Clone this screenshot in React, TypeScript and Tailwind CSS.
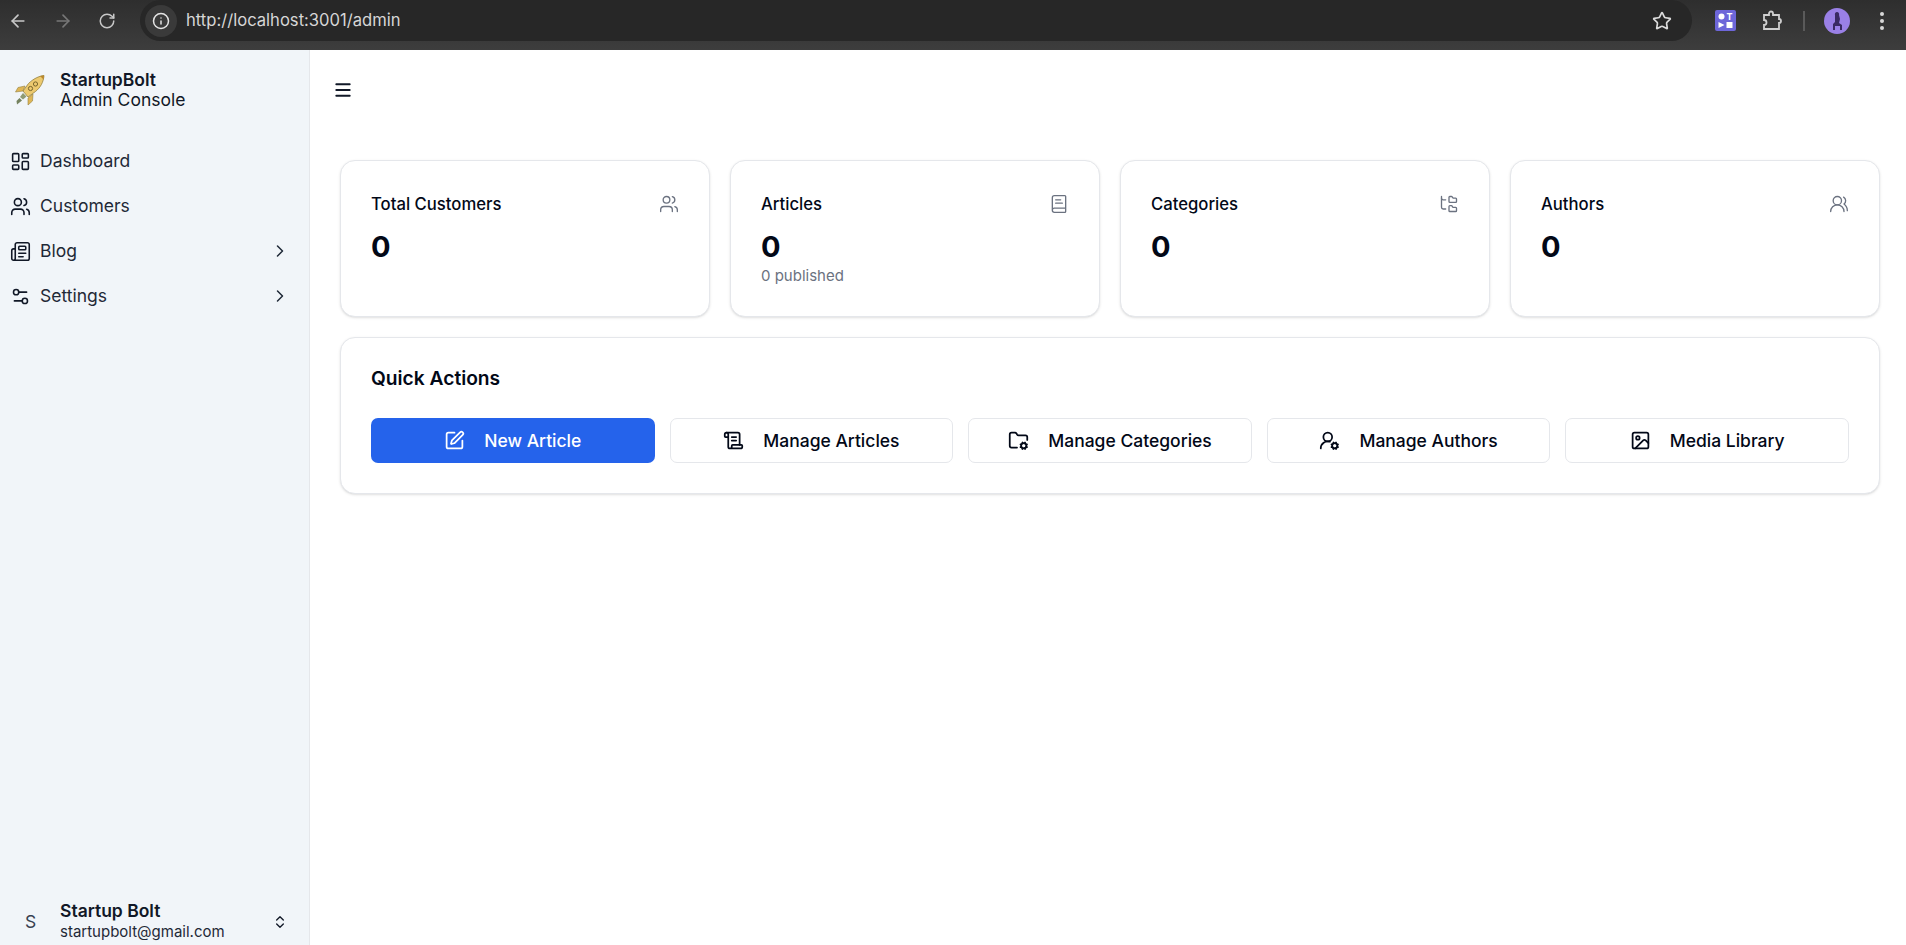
import {
  ArrowLeft, ArrowRight, RotateCw, Info, Star, LayoutDashboard, Users, Newspaper, Settings2, ChevronRight,
  ChevronsUpDown, Menu, BookText, FolderTree, UsersRound, SquarePen, ScrollText, FolderCog, UserRoundCog, Image as ImageIcon,
} from "lucide-react";
import type { ComponentType } from "react";

type IconT = ComponentType<{ size?: number; strokeWidth?: number; className?: string }>;

function Rocket() {
  return (
    <svg width="34" height="34" viewBox="0 0 34 34" className="shrink-0">
      <path d="M12 13 L5 14.5 L2.5 19 L10 18Z" fill="#dfb655" stroke="#94803f" strokeWidth="0.6" />
      <path d="M20 21 L19.5 28 L15 32 L15 25Z" fill="#dfb655" stroke="#94803f" strokeWidth="0.6" />
      <path d="M31 2.5 C26 3 20 6 15.5 10.5 L10 18 L15 24 L22.5 18.5 C27.5 14.5 30.5 9 31 2.5Z" fill="#ecc96f" stroke="#94803f" strokeWidth="0.8" />
      <path d="M10 20 L13.5 23.5 L10 26.5 L7 24Z" fill="#8f9a74" />
      <path d="M6.5 25 L9 27.5 L4 31.5 L3.5 28Z" fill="#75825f" />
      <circle cx="17.5" cy="15.5" r="2.1" fill="none" stroke="#6b5a24" strokeWidth="0.9" />
      <circle cx="22.5" cy="11" r="2.1" fill="none" stroke="#6b5a24" strokeWidth="0.9" />
      <path d="M27 3 L31 2.5 L30.5 6.5Z" fill="#b9872c" />
    </svg>
  );
}

function Toolbar() {
  return (
    <div className="h-[50px] shrink-0 flex items-start bg-gradient-to-b from-[#2e2e2e] to-[#3d3d3d] text-[#d8d8d8]">
      <div className="w-[140px] h-[41px] flex items-center shrink-0 pl-[8px] gap-[25px]">
        <ArrowLeft size={20} strokeWidth={2} className="text-[#c8c8c8]" />
        <ArrowRight size={20} strokeWidth={2} className="text-[#777777]" />
        <RotateCw size={18} strokeWidth={2} className="text-[#c8c8c8]" />
      </div>
      <div className="w-[1552px] h-[41px] rounded-[21px] bg-[#272727] flex items-center pl-[5px] pr-[20px] shrink-0">
        <div className="w-[32px] h-[32px] rounded-full bg-[#3a3a3a] flex items-center justify-center shrink-0">
          <Info size={18} strokeWidth={2} className="text-[#e4e4e4]" />
        </div>
        <span className="ml-[9px] text-[16.6px] text-[#d6d6d6]">http://localhost:3001/admin</span>
        <Star size={20} strokeWidth={2} className="ml-auto text-[#dcdcdc]" />
      </div>
      <div className="flex-1 h-[41px] flex items-center pl-[23px]">
        <svg width="21" height="21" viewBox="0 0 21 21" className="shrink-0">
          <rect width="21" height="21" rx="2" fill="#6d66d9" />
          <circle cx="6.5" cy="6.5" r="3" fill="#fff" />
          <text x="14.5" y="10" fontSize="9" fontWeight="700" textAnchor="middle" fill="#fff" fontFamily="Inter, sans-serif">T</text>
          <path d="M3.5 12 L9.5 15 L3.5 18Z" fill="#fff" />
          <rect x="11.5" y="12" width="6" height="6" fill="#fff" />
        </svg>
        <svg width="22" height="22" viewBox="0 0 22 22" fill="none" stroke="#cfcfcf" strokeWidth="1.8" className="ml-[25px] shrink-0">
          <path d="M3 5 H8 V3.5 a2 2 0 0 1 4 0 V5 H18 V9 a2 2 0 0 1 0 4 V19 H3 V15 a2.5 2.5 0 0 0 0 -5Z" />
        </svg>
        <div className="w-[2px] h-[20px] ml-[20px] bg-[#5a5a5a] shrink-0" />
        <div className="ml-[19px] w-[26px] h-[26px] rounded-full bg-[#9a80e6] flex items-center justify-center shrink-0">
          <svg width="16" height="20" viewBox="0 0 16 20" fill="#3a2a63">
            <path d="M8 1 a2.2 2.2 0 0 1 2 3 L11 8 L10 12 L13 14 V19 H11 V15 H6 V19 H4 V13 L6 11 L6 4 A2.2 2.2 0 0 1 8 1Z" />
          </svg>
        </div>
        <div className="ml-[30px] flex flex-col gap-[3px] shrink-0">
          <div className="w-[4px] h-[4px] rounded-full bg-[#d8d8d8]" />
          <div className="w-[4px] h-[4px] rounded-full bg-[#d8d8d8]" />
          <div className="w-[4px] h-[4px] rounded-full bg-[#d8d8d8]" />
        </div>
      </div>
    </div>
  );
}

function NavRow({ icon: Icon, label, chevron }: { icon: IconT; label: string; chevron?: boolean }) {
  return (
    <div className="h-[40px] flex items-center pl-[10px] pr-[19px] gap-[9px] text-[17.5px] text-[#1f2937]">
      <Icon size={21} strokeWidth={1.8} className="shrink-0 text-[#111827]" />
      <span className="pt-[1px]">{label}</span>
      {chevron && <ChevronRight size={20} strokeWidth={1.8} className="ml-auto text-[#1f2937]" />}
    </div>
  );
}

function Sidebar() {
  return (
    <aside className="w-[310px] shrink-0 bg-[#f1f5f9] border-r border-[#e5e7eb] flex flex-col">
      <div className="h-[91px] shrink-0 flex items-center pl-[13px] pb-[12px] gap-[13px]">
        <Rocket />
        <div className="text-[17.5px] leading-[20px] text-[#111827]">
          <div className="font-semibold">StartupBolt</div>
          <div>Admin Console</div>
        </div>
      </div>
      <nav className="flex flex-col gap-[5px]">
        <NavRow icon={LayoutDashboard} label="Dashboard" />
        <NavRow icon={Users} label="Customers" />
        <NavRow icon={Newspaper} label="Blog" chevron />
        <NavRow icon={Settings2} label="Settings" chevron />
      </nav>
      <div className="mt-auto h-[50px] flex items-center pl-[25px] pr-[21px] pt-[3px] text-[#111827]">
        <span className="w-[35px] text-[17.5px] pt-[1px] text-[#374151]">S</span>
        <div className="leading-none">
          <div className="text-[17.5px] leading-[20px] font-semibold">Startup Bolt</div>
          <div className="text-[15px] leading-[21px] text-[#1f2937]">startupbolt@gmail.com</div>
        </div>
        <ChevronsUpDown size={16} strokeWidth={2} className="ml-auto text-[#111827]" />
      </div>
    </aside>
  );
}

function Stat({ title, icon: Icon, sub }: { title: string; icon: IconT; sub?: string }) {
  return (
    <div className="rounded-[15px] border border-[#e5e7eb] bg-white shadow-sm p-[30px] text-[#020817]">
      <div className="flex items-center justify-between h-[24px]">
        <span className="text-[16.7px] font-medium pt-[3px]">{title}</span>
        <Icon size={20} strokeWidth={1.6} className="text-[#6b7280] mt-[1px]" />
      </div>
      <div className="mt-[12px] text-[29px] leading-[39px] font-bold">0</div>
      <div className="text-[15px] leading-[20px] text-[#6b7280] h-[20px]">{sub}</div>
    </div>
  );
}

function Action({ icon: Icon, label, primary }: { icon: IconT; label: string; primary?: boolean }) {
  return (
    <button
      className={
        primary
          ? "h-[45px] rounded-[7px] bg-[#2563eb] text-white flex items-center justify-center gap-[19px] text-[17.5px] font-medium"
          : "h-[45px] rounded-[7px] bg-white border border-[#e5e7eb] text-[#020817] flex items-center justify-center gap-[19px] text-[17.5px] font-medium"
      }
    >
      <Icon size={21} strokeWidth={2} />
      <span>{label}</span>
    </button>
  );
}

export default function App() {
  return (
    <div className="h-screen flex flex-col overflow-hidden bg-white font-['Inter',sans-serif]">
      <Toolbar />
      <div className="flex-1 flex min-h-0">
        <Sidebar />
        <main className="flex-1 min-w-0 pl-[30px] pr-[26px]">
          <div className="h-[80px] pt-[30px] flex items-start -ml-[7px] text-[#111827]">
            <Menu size={20} strokeWidth={2.4} />
          </div>
          <div className="pt-[30px] flex flex-col gap-[20px]">
            <div className="grid grid-cols-4 gap-[20px]">
              <Stat title="Total Customers" icon={Users} />
              <Stat title="Articles" icon={BookText} sub="0 published" />
              <Stat title="Categories" icon={FolderTree} />
              <Stat title="Authors" icon={UsersRound} />
            </div>
            <div className="rounded-[15px] border border-[#e5e7eb] bg-white shadow-sm px-[30px] pt-[31px] pb-[30px] text-[#020817]">
              <div className="text-[19.2px] leading-none font-semibold">Quick Actions</div>
              <div className="mt-[30px] grid grid-cols-5 gap-[15px]">
                <Action icon={SquarePen} label="New Article" primary />
                <Action icon={ScrollText} label="Manage Articles" />
                <Action icon={FolderCog} label="Manage Categories" />
                <Action icon={UserRoundCog} label="Manage Authors" />
                <Action icon={ImageIcon} label="Media Library" />
              </div>
            </div>
          </div>
        </main>
      </div>
    </div>
  );
}
